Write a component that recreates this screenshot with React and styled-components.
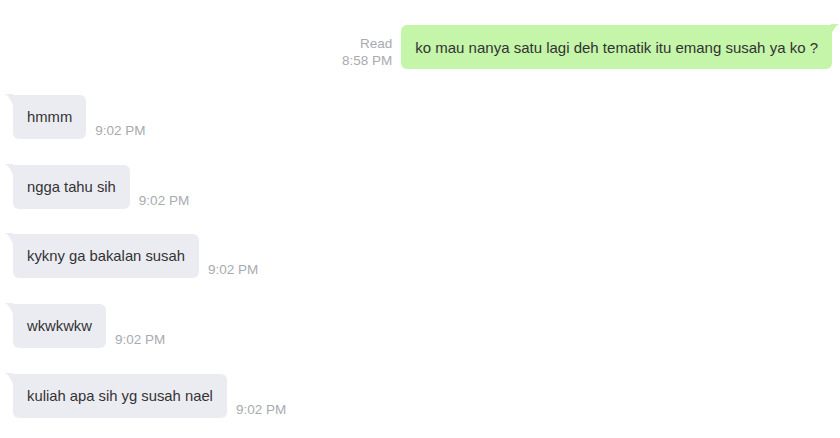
import React from "react";
import styled, { createGlobalStyle } from "styled-components";

const Global = createGlobalStyle`
  html, body { margin: 0; padding: 0; background: #ffffff; }
  body { font-family: "Liberation Sans", Arial, sans-serif; }
`;

const Chat = styled.div`
  width: 840px;
  box-sizing: border-box;
  padding: 25px 8px 0 13px;
  display: flex;
  flex-direction: column;
  gap: 25.75px;
`;

const Row = styled.div`
  display: flex;
  align-items: flex-end;
  justify-content: ${(p) => (p.$out ? "flex-end" : "flex-start")};
  gap: 9px;
`;

const Bubble = styled.div`
  position: relative;
  box-sizing: border-box;
  height: 44px;
  display: flex;
  align-items: center;
  padding: 0 14px;
  font-size: ${(p) => (p.$out ? "15px" : "14.8px")};
  color: #333333;
  background: ${(p) => (p.$out ? "#c4f5a9" : "#ebecf1")};
  border-radius: ${(p) => (p.$out ? "6px 0 6px 6px" : "0 6px 6px 6px")};
  white-space: nowrap;
`;

const Tail = styled.svg`
  position: absolute;
  top: -1px;
  width: 8px;
  height: 11px;
  ${(p) => (p.$out ? "right: -7px; transform: scaleX(-1);" : "left: -8px;")}
`;

const Meta = styled.div`
  display: flex;
  flex-direction: column;
  align-items: flex-end;
  font-size: 13.5px;
  line-height: 17px;
  color: #a9aab0;
  padding-bottom: 0;
  white-space: nowrap;
`;

const TailShape = ({ out }) => (
  <Tail $out={out} viewBox="0 0 8 11">
    <path d="M0 0 L8 0 L8 11 Q5 3 0 0 Z" fill={out ? "#c4f5a9" : "#ebecf1"} />
  </Tail>
);

const incoming = [
  "hmmm",
  "ngga tahu sih",
  "kykny ga bakalan susah",
  "wkwkwkw",
  "kuliah apa sih yg susah nael",
];

export default function App() {
  return (
    <>
      <Global />
      <Chat>
        <Row $out>
          <Meta>
            <span>Read</span>
            <span>8:58 PM</span>
          </Meta>
          <Bubble $out>
            <TailShape out />
            ko mau nanya satu lagi deh tematik itu emang susah ya ko ?
          </Bubble>
        </Row>
        {incoming.map((t) => (
          <Row key={t}>
            <Bubble>
              <TailShape />
              {t}
            </Bubble>
            <Meta>
              <span>9:02 PM</span>
            </Meta>
          </Row>
        ))}
      </Chat>
    </>
  );
}
